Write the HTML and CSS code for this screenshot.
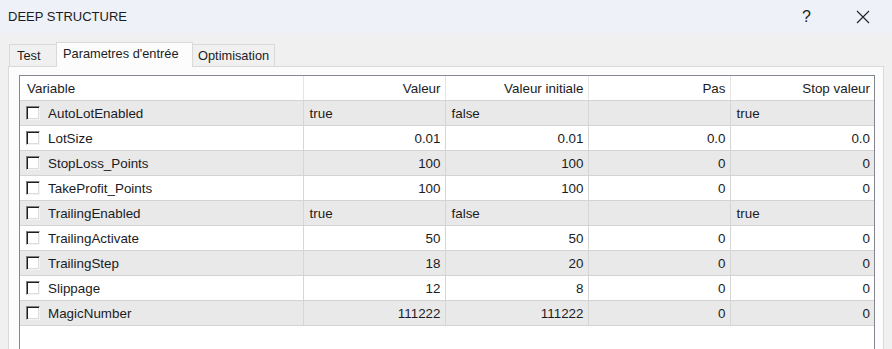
FILE: index.html
```html
<!DOCTYPE html>
<html>
  <head>
    <meta charset="utf-8">
    <title>DEEP STRUCTURE</title>
    <link rel="stylesheet" href="styles.css">
  </head>
  <body>
    <div class="titlebar">
      <span class="title">DEEP STRUCTURE</span>
      <span class="help">?</span>
      <svg class="close" width="14" height="14" viewBox="0 0 14 14">
        <path d="M1 1 L13 13 M13 1 L1 13" stroke="#222" stroke-width="1.1" fill="none"/>
      </svg>
    </div>

    <div class="tabs">
      <div class="tab tab-test">Test</div>
      <div class="tab active">Parametres d'entrée</div>
      <div class="tab tab-optim">Optimisation</div>
    </div>

    <div class="panel">
      <div class="listbox">
        <table class="params">
          <colgroup>
            <col class="c-var">
            <col class="c-val">
            <col class="c-init">
            <col class="c-step">
            <col class="c-stop">
          </colgroup>
          <thead>
            <tr>
              <th class="left">Variable</th>
              <th>Valeur</th>
              <th>Valeur initiale</th>
              <th>Pas</th>
              <th>Stop valeur</th>
            </tr>
          </thead>
          <tbody>
            <tr class="odd">
              <td class="name"><span class="check"></span>AutoLotEnabled</td>
              <td class="left">true</td>
              <td class="left">false</td>
              <td></td>
              <td class="left">true</td>
            </tr>
            <tr>
              <td class="name"><span class="check"></span>LotSize</td>
              <td>0.01</td>
              <td>0.01</td>
              <td>0.0</td>
              <td>0.0</td>
            </tr>
            <tr class="odd">
              <td class="name"><span class="check"></span>StopLoss_Points</td>
              <td>100</td>
              <td>100</td>
              <td>0</td>
              <td>0</td>
            </tr>
            <tr>
              <td class="name"><span class="check"></span>TakeProfit_Points</td>
              <td>100</td>
              <td>100</td>
              <td>0</td>
              <td>0</td>
            </tr>
            <tr class="odd">
              <td class="name"><span class="check"></span>TrailingEnabled</td>
              <td class="left">true</td>
              <td class="left">false</td>
              <td></td>
              <td class="left">true</td>
            </tr>
            <tr>
              <td class="name"><span class="check"></span>TrailingActivate</td>
              <td>50</td>
              <td>50</td>
              <td>0</td>
              <td>0</td>
            </tr>
            <tr class="odd">
              <td class="name"><span class="check"></span>TrailingStep</td>
              <td>18</td>
              <td>20</td>
              <td>0</td>
              <td>0</td>
            </tr>
            <tr>
              <td class="name"><span class="check"></span>Slippage</td>
              <td>12</td>
              <td>8</td>
              <td>0</td>
              <td>0</td>
            </tr>
            <tr class="odd">
              <td class="name"><span class="check"></span>MagicNumber</td>
              <td>111222</td>
              <td>111222</td>
              <td>0</td>
              <td>0</td>
            </tr>
          </tbody>
        </table>
      </div>
    </div>
  </body>
</html>
```

FILE: styles.css
```css
html, body { height: 100%; }
body {
  margin: 0;
  background: #f0f0f0;
  font-family: "Liberation Sans", Arial, sans-serif;
  color: #1b1b24;
  overflow: hidden;
}

.titlebar {
  height: 33px;
  background: #eef2f8;
  display: flex;
  align-items: center;
  padding-left: 8px;
}
.title { font-size: 13px; flex: 1; padding-bottom: 1px; }
.help { font-size: 16px; margin-right: 45px; color: #222; }
.close { margin-right: 22px; }

.tabs {
  display: flex;
  align-items: flex-end;
  padding-left: 9px;
  margin-top: 9px;
  height: 24px;
  position: relative;
  z-index: 1;
}
.tab {
  font-size: 12.8px;
  background: #f0f0f0;
  border: 1px solid #d9d9d9;
  border-bottom: none;
  height: 22px;
  line-height: 22px;
  box-sizing: border-box;
}
.tab-test { width: 47px; padding-left: 7px; border-right: none; }
.tab-optim { width: 82px; padding-left: 5px; border-left: none; }
.tab.active {
  background: #fcfcfc;
  height: 25px;
  line-height: 21px;
  width: 137px;
  padding-left: 6px;
  margin-bottom: -1px;
}

.panel {
  margin-left: 8px;
  width: 876px;
  height: 300px;
  border: 1px solid #d9d9d9;
  background: #fcfcfc;
  box-sizing: border-box;
  padding: 8px 0 0 10px;
}

.listbox {
  width: 856px;
  height: 290px;
  border: 1px solid #828790;
  background: #fff;
  box-sizing: border-box;
}

.params {
  border-collapse: collapse;
  table-layout: fixed;
  width: 854px;
  font-size: 13.4px;
}
.c-var { width: 283px; }
.c-val { width: 142px; }
.c-init { width: 143px; }
.c-step { width: 142px; }
.c-stop { width: 144px; }

.params th, .params td {
  height: 24px;
  padding: 0 4px 0 6px;
  text-align: right;
  white-space: nowrap;
  border-left: 1px solid #d6d6d6;
  border-bottom: 1px solid #d3d3d3;
}
.params th {
  font-weight: normal;
  background: #fff;
  border-left-color: #e5e5e5;
  padding-right: 4px;
}
.params th:first-child, .params td:first-child { border-left: none; }
.params .left { text-align: left; }
.params th.left { padding-left: 7px; }
.params tr.odd td { background: #e9e9e9; }

.params td.name {
  text-align: left;
  padding-left: 6px;
}
.check {
  display: inline-block;
  vertical-align: -2px;
  width: 14px;
  height: 14px;
  box-sizing: border-box;
  margin-right: 8px;
  background: #fff;
  border-top: 1px solid #808080;
  border-left: 1px solid #808080;
  border-right: 1px solid #f4f4f4;
  border-bottom: 1px solid #f4f4f4;
  box-shadow: inset 1px 1px 0 #1e1e1e, inset -1px -1px 0 #dcdcdc;
}
```
